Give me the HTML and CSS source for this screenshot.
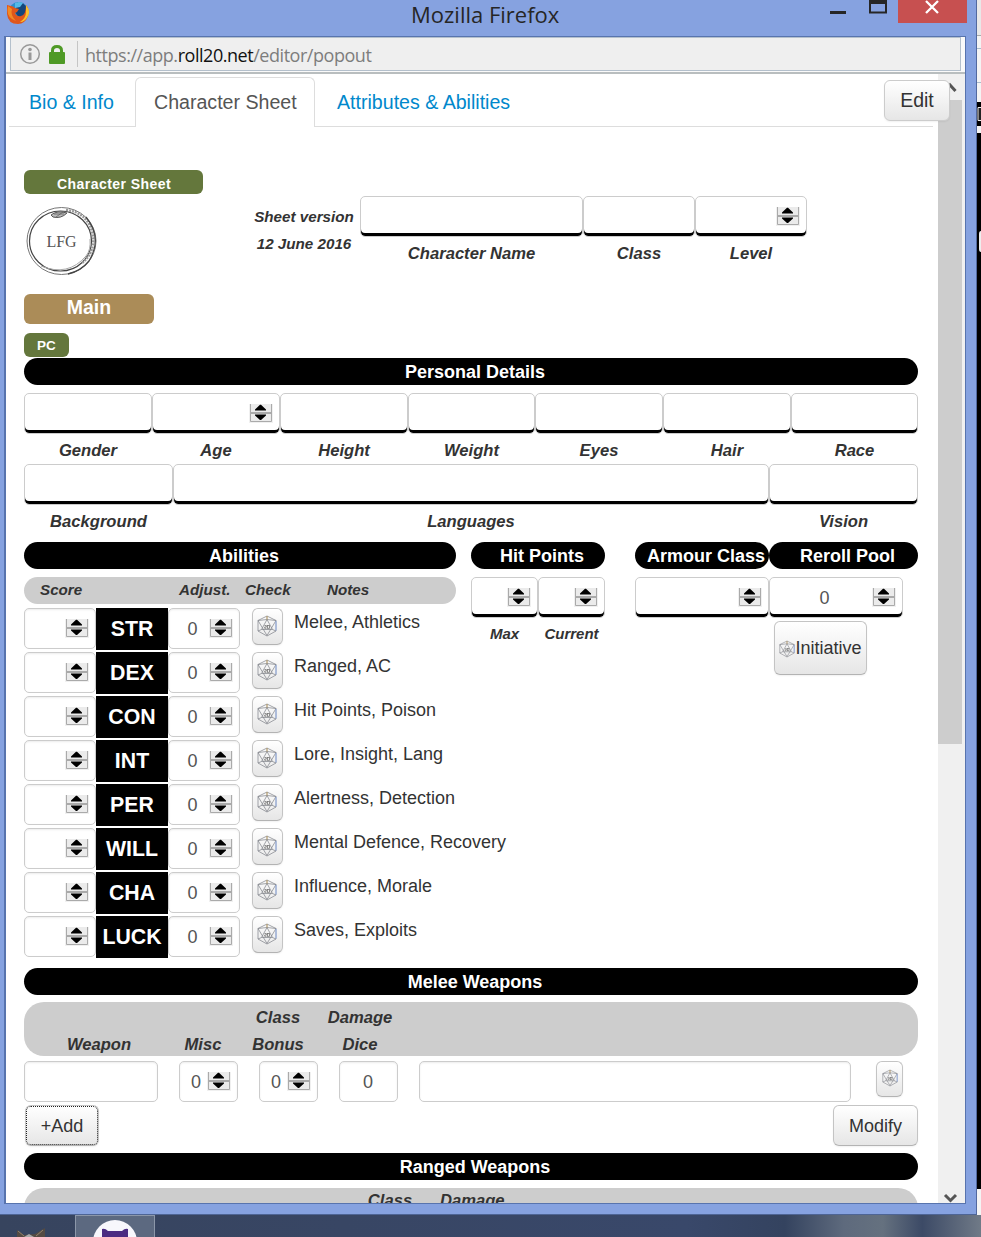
FILE: index.html
```html
<!DOCTYPE html>
<html lang="en">
<head>
<meta charset="utf-8">
<title>Mozilla Firefox</title>
<link rel="stylesheet" href="styles.css">
</head>
<body>
<svg class="defs" width="0" height="0">
  <symbol id="spin" viewBox="0 0 24 19">
    <rect width="24" height="19" fill="#f0f0f0"/>
    <path d="M1.500 0V17.500H22.500V0" fill="#ebebeb" stroke="#aaa"/>
    <path d="M1 9H23" stroke="#aaa" stroke-width="2"/>
    <path d="M6 6.500V5.500L11 .8H12L17 5.500V6.500ZM6 10.500V11.500L11 16H12L17 11.500V10.500Z" fill="#000"/>
  </symbol>
  <symbol id="die" viewBox="0 0 20 22">
    <g fill="none" stroke="#84878d" stroke-width=".75" stroke-linejoin="round">
      <path d="M10 1L19 5.500V16L10 21L1 16V5.500Z"/>
      <path d="M1 5.500L10 4.500L19 5.500L10 20.500ZM10 1V4.500M10 4.500L4.500 14.500H15.500ZM1 16L4.500 14.500M19 16L15.500 14.500"/>
    </g>
    <path d="M19 6V15.500" stroke="#86a8ef" stroke-width=".8"/>
    <path d="M10 1V4.500" stroke="#c9a45c" stroke-width=".8"/>
    <g fill="none" stroke="#777" stroke-width=".8"><path d="M7.500 10.500H9.300V12H7.700V13.300H9.500"/><rect x="10.500" y="10.500" width="2" height="2.800"/></g>
  </symbol>
</svg>
<div class="desktop">
  <div class="upper">
    <div class="window">
      <header class="titlebar">
        <svg class="fox" width="24" height="26" viewBox="0 0 24 26">
          <circle cx="12.500" cy="12" r="10" fill="#2b8fd0"/>
          <path d="M11 2Q18 2 21 8L20 15L13 18L9 12Z" fill="#15467c"/>
          <path d="M9 3Q13 1 17 3L14 7L9 8Z" fill="#54b9e8"/>
          <path d="M1 5L5 6Q7 6 9 8L13 9L11 12L9 13Q11 17 15 16Q20 15 20 5Q24 9 22 16Q19 24 12 24Q2 24 1 14Z" fill="#e0561b"/>
          <path d="M20 5Q25 11 22 16Q19 22 14 22Q20 18 20 12Z" fill="#fbc02c"/>
          <path d="M2 6Q0 15 6 19L10 21Q4 15 6 9Z" fill="#f28a25"/>
        </svg>
        <h1 class="title">Mozilla Firefox</h1>
        <svg class="controls" width="140" height="24" viewBox="0 0 140 24">
          <path d="M2 12.500H18" stroke="#262626" stroke-width="3"/>
          <path d="M42 0V12.500H58V0" fill="none" stroke="#262626" stroke-width="2"/><path d="M41 2H59" stroke="#262626" stroke-width="4"/>
          <path d="M70 0H139V23H70Z" fill="#c75050"/>
          <path d="M98 1L110 13M110 1L98 13" stroke="#fff" stroke-width="2.300"/>
        </svg>
      </header>
      <div class="frame">
        <div class="urlbar">
          <div class="urlbox">
            <svg width="48" height="24" viewBox="0 0 48 24">
              <circle cx="11" cy="12" r="9.300" fill="none" stroke="#999" stroke-width="1.500"/>
              <path d="M11 10.500V18" stroke="#999" stroke-width="3"/><circle cx="11" cy="7.500" r="1.800" fill="#999"/>
              <rect x="30" y="10" width="16" height="12" rx="1" fill="#4f9a26"/>
              <path d="M33.500 12V8.500Q33.500 4.500 38 4.500T42.500 8.500V12" fill="none" stroke="#4f9a26" stroke-width="3"/>
            </svg>
            <span class="rule"></span>
            <span class="url">https://app.<b>roll20.net</b>/editor/popout</span>
          </div>
        </div>
        <div class="viewport">
          <main class="page">
            <nav class="tabs">
              <a class="tab">Bio &amp; Info</a>
              <a class="tab active">Character Sheet</a>
              <a class="tab">Attributes &amp; Abilities</a>
            </nav>
            <div class="sheet">
              <section class="head">
                <div class="brand">
                  <span class="badge wide">Character Sheet</span>
                  <svg class="logo" width="74" height="72" viewBox="0 0 74 72">
                    <g fill="none" stroke="#777">
                      <ellipse cx="37.500" cy="36" rx="34.500" ry="33.500" stroke-width="1"/>
                      <ellipse cx="36.500" cy="36" rx="31" ry="30" stroke="#444" stroke-width="1.200"/>
                      <path d="M42 5Q62 7 68 26Q73 46 58 58" stroke="#999" stroke-width="2.500" stroke-dasharray="2 1"/>
                      <path d="M62 12Q79 33 65 56Q57 66 44 69" stroke="#444" stroke-width="1.300"/>
                      <path d="M17 61Q44 72 62 51Q67 45 66 34" stroke="#aaa"/>
                      <path d="M27 10Q33 5 43 8Q37 14 29 12Z" fill="#bbb" stroke="#555"/>
                      <path d="M30 9H40M32 12L39 7" stroke="#555" stroke-width=".7"/>
                    </g>
                    <text x="37.500" y="42" text-anchor="middle" class="lfg">LFG</text>
                  </svg>
                </div>
                <div class="version">Sheet version<br>12 June 2016</div>
                <div class="fields identity">
                  <label class="field"><i class="box"></i>Character Name</label>
                  <label class="field"><i class="box"></i>Class</label>
                  <label class="field"><i class="box"><svg class="spin"><use href="#spin"/></svg></i>Level</label>
                </div>
              </section>
              <div class="badge main">Main</div>
              <div class="badge pc">PC</div>
              <h2 class="bar">Personal Details</h2>
              <div class="fields seven">
                <label class="field"><i class="box"></i>Gender</label>
                <label class="field"><i class="box"><svg class="spin"><use href="#spin"/></svg></i>Age</label>
                <label class="field"><i class="box"></i>Height</label>
                <label class="field"><i class="box"></i>Weight</label>
                <label class="field"><i class="box"></i>Eyes</label>
                <label class="field"><i class="box"></i>Hair</label>
                <label class="field"><i class="box"></i>Race</label>
              </div>
              <div class="fields three">
                <label class="field"><i class="box"></i>Background</label>
                <label class="field"><i class="box"></i>Languages</label>
                <label class="field"><i class="box"></i>Vision</label>
              </div>
              <div class="stats">
                <section class="abilities">
                  <h2 class="bar">Abilities</h2>
                  <div class="cols"><span>Score</span><span>Adjust.</span><span>Check</span><span>Notes</span></div>
                  <div id="rows"></div>
                </section>
                <section class="hp">
                  <h2 class="bar">Hit Points</h2>
                  <div class="fields two small">
                    <label class="field"><i class="box"><svg class="spin"><use href="#spin"/></svg></i>Max</label>
                    <label class="field"><i class="box"><svg class="spin"><use href="#spin"/></svg></i>Current</label>
                  </div>
                </section>
                <section class="ac">
                  <h2 class="bar">Armour Class</h2>
                  <div class="box"><svg class="spin"><use href="#spin"/></svg></div>
                </section>
                <section class="pool">
                  <h2 class="bar">Reroll Pool</h2>
                  <div class="box short"><span class="num">0</span><svg class="spin"><use href="#spin"/></svg></div>
                  <button class="btn init"><svg width="16" height="18"><use href="#die"/></svg>Initiative</button>
                </section>
              </div>
              <h2 class="bar">Melee Weapons</h2>
              <div class="cols weapons"><span>Weapon</span><span>Misc</span><span>Class<br>Bonus</span><span>Damage<br>Dice</span></div>
              <div class="weapon">
                <div class="input"></div>
                <div class="input"><span class="num">0</span><svg class="spin"><use href="#spin"/></svg></div>
                <div class="input"><span class="num">0</span><svg class="spin"><use href="#spin"/></svg></div>
                <div class="input"><span class="num">0</span></div>
                <div class="input"></div>
                <button class="btn roll"><svg width="16" height="18"><use href="#die"/></svg></button>
              </div>
              <div class="actions"><button class="btn add">+Add</button><button class="btn modify">Modify</button></div>
              <h2 class="bar">Ranged Weapons</h2>
              <div class="cols weapons ranged"><span>Class</span><span>Damage</span></div>
            </div>
          </main>
          <div class="scroll">
            <svg class="arrow" width="24" height="26" viewBox="0 0 24 26"><path d="M7 16.500L12 11L17.500 17" fill="none" stroke="#555" stroke-width="3"/></svg>
            <div class="thumb"></div>
            <svg class="arrow down" width="24" height="16" viewBox="0 0 24 16"><path d="M7 8L12.500 13.500L18 8" fill="none" stroke="#555" stroke-width="3"/></svg>
          </div>
          <button class="btn edit">Edit</button>
        </div>
      </div>
    </div>
    <svg class="behind" width="4" height="1215" viewBox="0 0 4 1215">
      <path d="M0 0H4V1215H0Z" fill="#f4f4f4"/>
      <path d="M0 0H4V35H0Z" fill="#e8e8e8"/>
      <path d="M0 35.500H4" stroke="#aaa"/><path d="M0 48.500H4M0 82.500H4" stroke="#abc"/>
      <path d="M0 102H4V126H0ZM0 133H4V1189H0Z" fill="#000"/>
      <path d="M4 107.500H1V120.500H4" fill="#222" stroke="#eee"/>
      <path d="M4 231Q2 231 2 234V249Q2 252 4 252Z" fill="#eee"/>
    </svg>
  </div>
  <footer class="taskbar">
    <svg class="cat" width="50" height="22" viewBox="0 0 50 22"><path d="M17 22V15L24 20L35 19L45 13V22Z" fill="#554b43"/><path d="M24 22L29 19L34 22Z" fill="#aaa"/><path d="M18 16L24 21M43 15L36 21" stroke="#92836c"/></svg>
    <div class="task"><svg width="78" height="22" viewBox="0 0 78 22"><circle cx="39" cy="26" r="22" fill="#f7f7fc"/><path d="M26 22V13Q29 12 32 15H46Q49 12 52 13V22Z" fill="#4b2c82"/></svg></div>
  </footer>
</div>
<script src="script.js"></script>
</body>
</html>
```

FILE: styles.css
```css
* { box-sizing: border-box; }
body { margin: 0; font-family: "Liberation Sans", Arial, sans-serif; font-size: 18px; color: #333; }
svg { display: block; flex: none; }
.defs { position: absolute; }
.desktop { width: 981px; height: 1237px; overflow: hidden; background: #fff; }
.upper { display: flex; height: 1215px; }
.window { width: 977px; height: 1215px; background: #86a2e0; border-right: 1px solid #52699f; border-bottom: 1px solid #4e6595; }
.titlebar { height: 36px; display: flex; align-items: flex-start; }
.fox { margin-left: 6px; }
.title { margin: 0 0 0 381px; width: 417px; font: 400 22px/29px "Open Sans", "Noto Sans", sans-serif; color: #262626; white-space: nowrap; }
.frame { margin-left: 4px; width: 962px; height: 1168px; border: 1px solid #5874ae; border-left-width: 2px; background: #fff; display: flex; flex-direction: column; }
.urlbar { height: 37px; padding: 0 4px 1px; border-bottom: 2px solid #b9bebf; background: #fafafa; }
.urlbox { height: 34px; border: 1px solid #b4c0cc; background: #efefef; display: flex; align-items: center; padding-left: 8px; }
.rule { width: 1px; height: 26px; background: #c5c5c5; margin: 0 7px 0 10px; }
.url { font: 18px/32px "Open Sans", "Noto Sans", sans-serif; letter-spacing: -.46px; color: #7d7d7d; padding-top: 2px; }
.url b { font-weight: 400; color: #111; }
.viewport { position: relative; flex: 1; min-height: 0; display: flex; background: #f0f0f0; }
.page { width: 932px; height: 1129px; overflow: hidden; background: #fff; }
.tabs { margin: 0 5px 0 3px; height: 53px; padding: 3px 0 0 1px; border-bottom: 1px solid #ddd; display: flex; font-size: 19.600px; line-height: 50px; }
.tab { color: #08c; padding: 0 22px 0 19px; height: 50px; white-space: nowrap; }
.tab.active { width: 180px; padding: 0 18px; margin-right: 3px; color: #555; background: #fff; border: 1px solid #ddd; border-bottom: 0; border-radius: 6px 6px 0 0; line-height: 48px; }
.tab:first-child { width: 125px; }
.sheet { width: 894px; margin-left: 18px; padding-top: 43px; }
.head { display: flex; height: 124px; }
.brand { width: 179px; }
.badge { display: block; background: #64773c; color: #fff; font-weight: 700; border-radius: 6px; }
.wide { height: 24px; padding-left: 33px; font-size: 14px; line-height: 28px; letter-spacing: .45px; }
.logo { margin-top: 11px; }
.lfg { font: 16px "Liberation Serif", serif; fill: #555; }
.version { width: 154px; margin: 33px 3px 0 0; padding-left: 48px; text-align: center; white-space: nowrap; font: italic 700 15.200px/27px "Liberation Sans", Arial, sans-serif; }
.fields { display: grid; font-size: 16.600px; font-weight: 700; font-style: italic; text-align: center; }
.field { display: block; line-height: 27px; height: 71px; text-indent: 1px; }
.identity { grid-template-columns: 223px 112px 112px; margin-top: 26px; }
.seven { grid-template-columns: 128px 128px 128px 127px 128px 128px 127px; margin-top: 8px; }
.three { grid-template-columns: 149px 596px 149px; }
.two { grid-template-columns: 67px 67px; }
.small { font-size: 15px; }
.small .field { line-height: 26px; }
.box { height: 41px; margin-bottom: 3px; background: #fff; border: 1px solid #ccc; border-radius: 5px; display: flex; justify-content: flex-end; padding: 10px 6px 0 0; box-shadow: inset 0 -3px 0 #000; font-style: normal; }
.spin { width: 24px; height: 19px; }
.main { width: 130px; height: 30px; font-size: 19.500px; line-height: 26px; text-align: center; background: #ab8c58; }
.pc { width: 45px; height: 24px; margin: 9px 0 1px; font-size: 13.500px; line-height: 26px; text-align: center; }
.bar { margin: 0; height: 27px; padding-left: 8px; border-radius: 14px; background: #000; color: #fff; font-size: 18px; line-height: 28px; text-align: center; white-space: nowrap; }
.stats { display: flex; height: 426px; margin-top: 7px; }
.abilities { width: 432px; margin-right: 15px; }
.cols { display: grid; align-items: end; background: #cdcdcd; border-radius: 20px; font: italic 700 15px/27px "Liberation Sans", Arial, sans-serif; }
.abilities .cols { grid-template-columns: 139px 66px 82px 80px; margin: 8px 0 4px; padding-left: 16px; height: 27px; line-height: 26px; align-items: start; font-size: 15.200px; }
.ability { display: grid; grid-template-columns: 72px 72px 72px 12px 31px 11px 240px; height: 44px; }
.input { height: 41px; border: 1px solid #ccc; border-radius: 5px; background: #fff; box-shadow: inset 0 1px 2px rgba(0,0,0,.08); display: flex; justify-content: flex-end; padding: 10px 6px 0 0; }
.num { flex: 1; text-align: center; font-size: 18px; line-height: 20px; color: #555; }
.ability .num { padding-left: 7px; }
.name { height: 42px; background: #000; color: #fff; font-size: 21.300px; font-weight: 700; line-height: 43px; text-align: center; }
.btn { display: flex; align-items: center; justify-content: center; padding: 0; border: 1px solid #c4c4c4; border-bottom-color: #b3b3b3; border-radius: 6px; background: linear-gradient(#fff, #e6e6e6); box-shadow: 0 1px 2px rgba(0,0,0,.06); color: #333; font: 18px/27px "Liberation Sans", Arial, sans-serif; }
.check { grid-column: 5; height: 37px; padding-bottom: 2px; padding-right: 1px; }
.note { grid-column: 7; line-height: 28px; white-space: nowrap; }
.hp { width: 134px; margin-right: 30px; }
.hp .fields, .ac .box, .pool .box { margin-top: 8px; }
.ac { width: 134px; }
.pool { width: 149px; }
.short { width: 134px; }
.pool .num { padding-left: 7px; }
.init { width: 93px; height: 54px; margin-left: 5px; padding-top: 1px; }
.cols.weapons { height: 54px; margin: 7px 0 5px; grid-template-columns: 104px 104px 46px 118px; padding-left: 23px; padding-top: 1px; font-size: 16.600px; text-align: center; align-items: end; line-height: 27px; }
.weapons span { position: relative; top: 1px; }
.weapons span:nth-child(n+2) { justify-self: center; }
.weapon { display: grid; grid-template-columns: 134px 59px 59px 59px 432px 27px; column-gap: 21px; height: 44px; }
.weapon > :last-child { margin-left: 4px; width: 27px; height: 36px; }
.weapon .num { padding-left: 5px; }
.roll { align-items: flex-start; padding-top: 7px; }
.actions { display: flex; justify-content: space-between; height: 48px; }
.btn.add, .btn.modify { padding-top: 1px; }
.add { width: 74px; height: 41px; margin-left: 1px; outline: 1px dotted #222; outline-offset: -2px; }
.modify { width: 85px; height: 41px; }
.cols.ranged { margin-top: 8px; grid-template-columns: 112px 72px; padding: 0 0 0 310px; align-items: start; line-height: 24px; }
.cols.ranged span { justify-self: center; }
.cols.ranged span:nth-child(2) { justify-self: start; margin-left: -6px; }
.scroll { width: 24px; display: flex; flex-direction: column; }
.thumb { height: 644px; background: #cdcdcd; }
.down { margin-top: auto; }
.edit { position: absolute; left: 878px; top: 6px; width: 66px; height: 41px; font-size: 19.500px; border-color: #ccc; }
.taskbar { height: 22px; display: flex; background: linear-gradient(90deg, #37445e 0, #39486a 70%, #34435f 80%, #5e6a7d 86%, #65717f 90%, #3c4a66 94%, #707a87 100%); }
.cat { margin-right: 25px; }
.task { width: 80px; height: 22px; border: 1px solid #8c97a9; border-bottom: 0; background: #5c6980; }
```

FILE: script.js
```js
const abilities = [
  ["STR", "Melee, Athletics"],
  ["DEX", "Ranged, AC"],
  ["CON", "Hit Points, Poison"],
  ["INT", "Lore, Insight, Lang"],
  ["PER", "Alertness, Detection"],
  ["WILL", "Mental Defence, Recovery"],
  ["CHA", "Influence, Morale"],
  ["LUCK", "Saves, Exploits"]
];
const spin = '<svg class="spin"><use href="#spin"/></svg>';
document.getElementById("rows").innerHTML = abilities.map(([name, note]) => `
  <div class="ability">
    <div class="input">${spin}</div>
    <div class="name">${name}</div>
    <div class="input"><span class="num">0</span>${spin}</div>
    <button class="btn check"><svg width="20" height="22"><use href="#die"/></svg></button>
    <div class="note">${note}</div>
  </div>`).join("");
```
